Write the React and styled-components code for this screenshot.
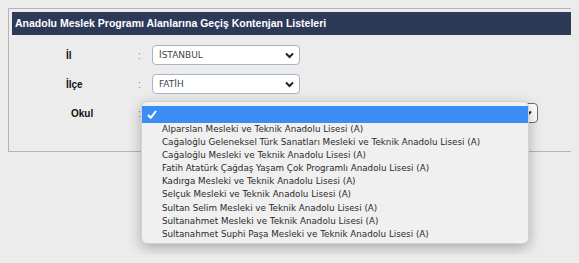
import styled, { createGlobalStyle } from 'styled-components'

const GlobalStyle = createGlobalStyle`
  html, body {
    background: #ececec;
  }
  body {
    margin: 8px;
    min-height: calc(100vh - 16px);
    font-family: "Liberation Sans", Arial, sans-serif;
  }
`

const Panel = styled.div`
  position: relative;
  width: 560px;
  height: 136px;
  border: 1px solid #b4b4b4;
  padding: 3px;
`

const Header = styled.div`
  height: 23px;
  background: #2c3a58;
  color: #fff;
  font-weight: bold;
  font-size: 10.5px;
  line-height: 23px;
  padding-left: 3px;
`

const Form = styled.div`
  display: flex;
  flex-direction: column;
  gap: 9px;
  padding-top: 10px;
`

const Row = styled.div`
  display: grid;
  grid-template-columns: 72px 14px auto;
  align-items: center;
  padding-left: 54px;
`

const Label = styled.div`
  font-weight: bold;
  font-size: 10px;
  color: #111;
  padding-left: ${p => p.$shift || 0}px;
`

const Colon = styled.div`
  font-size: 10px;
  color: #888;
`

const Select = styled.div`
  position: relative;
  width: ${p => p.$width}px;
  height: 20px;
  box-sizing: border-box;
  background: #fff;
  border: 1px solid ${p => p.$dark ? '#6c6c6c' : '#a6b4c4'};
  border-radius: 4px;
  font-family: "DejaVu Sans", Verdana, sans-serif;
  font-size: 9px;
  color: #444;
  line-height: 18px;
  padding-left: 6px;
`

const ChevronIcon = styled.svg`
  position: absolute;
  right: 5px;
  top: 6px;
`

const Popup = styled.div`
  position: absolute;
  left: -12px;
  top: -3px;
  width: 388px;
  height: 143px;
  box-sizing: border-box;
  padding-top: 4px;
  background: #f0f0f0;
  border: 1px solid rgba(0, 0, 0, 0.12);
  border-radius: 6px;
  box-shadow: 0 4px 14px rgba(0, 0, 0, 0.28);
  font-family: "DejaVu Sans", Verdana, sans-serif;
  font-size: 8.75px;
  color: #2a2a2a;
  z-index: 5;
`

const Option = styled.div`
  position: relative;
  height: ${p => p.$selected ? '17px' : '13.1px'};
  line-height: ${p => p.$selected ? '17px' : '13.1px'};
  padding-left: 20px;
  background: ${p => p.$selected ? '#3b8df6' : 'transparent'};
  white-space: nowrap;
`

const CheckIcon = styled.svg`
  position: absolute;
  left: 5px;
  top: 4px;
`

const Chevron = () => (
  <ChevronIcon width="9" height="7" viewBox="0 0 9 7">
    <polyline points="1,1.5 4.5,5 8,1.5" fill="none" stroke="#222" strokeWidth="2" />
  </ChevronIcon>
)

const schools = [
  'Alparslan Mesleki ve Teknik Anadolu Lisesi (A)',
  'Cağaloğlu Geleneksel Türk Sanatları Mesleki ve Teknik Anadolu Lisesi (A)',
  'Cağaloğlu Mesleki ve Teknik Anadolu Lisesi (A)',
  'Fatih Atatürk Çağdaş Yaşam Çok Programlı Anadolu Lisesi (A)',
  'Kadırga Mesleki ve Teknik Anadolu Lisesi (A)',
  'Selçuk Mesleki ve Teknik Anadolu Lisesi (A)',
  'Sultan Selim Mesleki ve Teknik Anadolu Lisesi (A)',
  'Sultanahmet Mesleki ve Teknik Anadolu Lisesi (A)',
  'Sultanahmet Suphi Paşa Mesleki ve Teknik Anadolu Lisesi (A)',
]

export default function App () {
  return (
    <>
      <GlobalStyle />
      <Panel>
        <Header>Anadolu Meslek Programı Alanlarına Geçiş Kontenjan Listeleri</Header>
        <Form>
          <Row>
            <Label>İl</Label>
            <Colon>:</Colon>
            <Select $width={148}>İSTANBUL<Chevron /></Select>
          </Row>
          <Row>
            <Label>İlçe</Label>
            <Colon>:</Colon>
            <Select $width={148}>FATİH<Chevron /></Select>
          </Row>
          <Row>
            <Label $shift={5}>Okul</Label>
            <Colon>:</Colon>
            <Select $width={386} $dark>
              <Chevron />
              <Popup>
                <Option $selected>
                  <CheckIcon width="10" height="9" viewBox="0 0 10 9">
                    <polyline points="1,5 3.8,7.8 9,1" fill="none" stroke="#fff" strokeWidth="2" />
                  </CheckIcon>
                </Option>
                {schools.map(s => <Option key={s}>{s}</Option>)}
              </Popup>
            </Select>
          </Row>
        </Form>
      </Panel>
    </>
  )
}
